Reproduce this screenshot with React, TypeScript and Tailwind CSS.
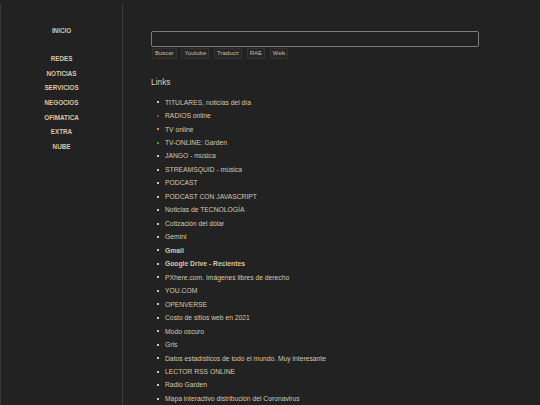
import React from "react";

const nav = ["REDES", "NOTICIAS", "SERVICIOS", "NEGOCIOS", "OFIMATICA", "EXTRA", "NUBE"];

type Item = { t: string; b?: boolean; c?: string };
const links: Item[] = [
  { t: "TITULARES, noticias del día" },
  { t: "RADIOS online", c: "bg-[#a8322e]" },
  { t: "TV online", c: "bg-[#d8875c]" },
  { t: "TV-ONLINE: Garden", c: "bg-[#3f9e3a]" },
  { t: "JANGO - música" },
  { t: "STREAMSQUID - música" },
  { t: "PODCAST" },
  { t: "PODCAST CON JAVASCRIPT" },
  { t: "Noticias de TECNOLOGÍA" },
  { t: "Cotización del dólar" },
  { t: "Gemini" },
  { t: "Gmail", b: true },
  { t: "Google Drive - Recientes", b: true },
  { t: "PXhere.com. Imágenes libres de derecho" },
  { t: "YOU.COM" },
  { t: "OPENVERSE" },
  { t: "Costo de sitios web en 2021" },
  { t: "Modo oscuro" },
  { t: "Gris" },
  { t: "Datos estadísticos de todo el mundo. Muy interesante" },
  { t: "LECTOR RSS ONLINE" },
  { t: "Radio Garden" },
  { t: "Mapa interactivo distribución del Coronavirus" },
];

const buttons = ["Buscar", "Youtube", "Traducir", "RAE", "Web"];

export default function App() {
  return (
    <div
      className="w-[540px] h-[405px] overflow-hidden bg-[#222222] text-[#d9c8a9] flex"
      style={{ fontFamily: '"Liberation Sans", Arial, sans-serif' }}
    >
      <aside className="w-[123px] shrink-0 mt-[4px] border-l border-r border-[#3a3a3a] pt-[19.5px]">
        <div className="h-[14.6px] leading-[14.6px] text-center text-[6.3px] font-bold">INICIO</div>
        <div className="h-[14.1px]" />
        {nav.map((n) => (
          <div key={n} className="h-[14.6px] leading-[14.6px] text-center text-[6.3px] font-bold">
            {n}
          </div>
        ))}
      </aside>
      <main className="flex-1 pl-[28px] pt-[31px]">
        <div className="w-[328px] h-[16px] border border-[#7d7d7d] rounded-[2px]" />
        <div className="flex gap-[4.8px] mt-[1.3px] ml-[1px]">
          {buttons.map((b) => (
            <div
              key={b}
              className="h-[11px] px-[2px] leading-[9px] text-[6px] bg-[#262626] border border-[#333333] rounded-[1px] text-[#cbbb9e]"
            >
              {b}
            </div>
          ))}
        </div>
        <h2 className="mt-[17.5px] h-[10px] leading-[10px] text-[8.4px] text-[#ddcdae]">Links</h2>
        <ul className="mt-[8.8px]">
          {links.map((l) => (
            <li
              key={l.t}
              className="h-[13.48px] leading-[13.48px] text-[6.75px] flex items-center"
            >
              <span className={`w-[2px] h-[2px] ml-[6px] mr-[6px] ${l.c ?? "bg-[#d9c8a9]"}`} />
              <span className={l.b ? "font-bold" : ""}>{l.t}</span>
            </li>
          ))}
        </ul>
      </main>
    </div>
  );
}
